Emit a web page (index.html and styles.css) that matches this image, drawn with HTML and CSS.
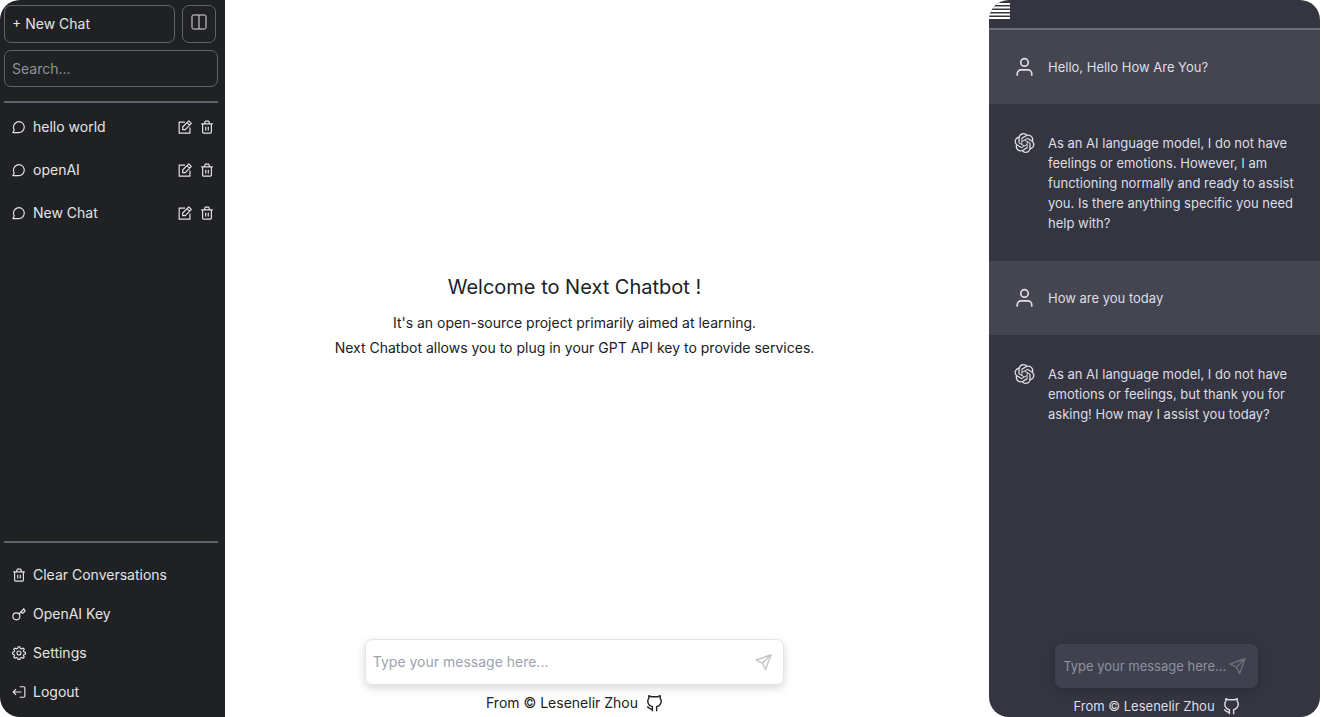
FILE: index.html
```html
<!DOCTYPE html>
<html lang="en">
<head>
<meta charset="utf-8">
<title>Next Chatbot</title>
<link rel="stylesheet" href="styles.css">
</head>
<body>
<svg class="sprite" aria-hidden="true">
  <symbol id="chat" viewBox="0 0 24 24"><path d="M1.500 21.500 3.800 17A9.300 9.300 0 1 1 12.500 21.500Z"/></symbol>
  <symbol id="edit" viewBox="0 0 24 24"><path d="M12 3.500H2v19h18.500V13M8 16.500v-4.500L18.500 1.500l4.300 4.300L12.500 16.500zM15.500 4.500l4.300 4.300"/></symbol>
  <symbol id="trash" viewBox="0 0 24 24"><path d="M2 6.500h20M4.500 6.500V21q0 1.500 1.500 1.500h12q1.500 0 1.500-1.500V6.500M7.500 6.500 9 2h6l1.500 4.500M9.800 11.500v6.500M14.200 11.500v6.500"/></symbol>
  <symbol id="key" viewBox="0 0 24 24"><circle cx="7.500" cy="16" r="6"/><path d="M12 12l8.500-9M15.500 8.500l2.800 2.500 4.200-4-2.500-4.200"/></symbol>
  <symbol id="gear" viewBox="0 0 24 24"><circle cx="12" cy="12" r="3.400"/><path d="M9.800 4 10.500 1.300h3L14.200 4l2.300 1 2.500-1.500 2 2-1.400 2.500 1 2.300 2.600.6v2.900l-2.600.7-1 2.300L21 19l-2 2-2.500-1.400-2.300 1-.7 2.500h-3l-.7-2.500-2.300-1L5 21l-2-2 1.400-2.200-1-2.300-2.600-.7v-2.900l2.600-.6 1-2.300L3 5.500l2-2L7.500 5z"/></symbol>
  <symbol id="logout" viewBox="0 0 24 24"><path d="M13 3h7q2 0 2 2v14q0 2-2 2h-7M16 12H2M7 7l-5 5 5 5"/></symbol>
  <symbol id="columns" viewBox="0 0 24 24"><rect x="1.500" y="1.500" width="21" height="21" rx="2"/><path d="M12 2v20"/></symbol>
  <symbol id="send" viewBox="0 0 24 24"><path d="M22.500 1 1.500 8.500l9 4.500 4.500 9zM22.500 1l-12 12"/></symbol>
  <symbol id="user" viewBox="0 0 24 24"><circle cx="12" cy="6.500" r="4.500"/><path d="M3.300 22.500v-2.500a4.500 4.500 0 0 1 4.500-4.500h8.400a4.500 4.500 0 0 1 4.500 4.500v2.500"/></symbol>
  <symbol id="github" viewBox="0 0 24 24"><path d="M9 23v-6.500C5 15.500 2.500 13.500 2.500 8.500c0-2 .5-3 1.500-4V1L7.500 2.500h9L20 1v3.500c1 1 1.500 2 1.500 4 0 5-2.500 7-6.500 8V23M9 20c-4 .8-4.500-2.500-7.500-3.500"/></symbol>
  <symbol id="openai" viewBox="0 0 24 24"><path d="M22.2819 9.8211a5.9847 5.9847 0 0 0-.5157-4.9108 6.0462 6.0462 0 0 0-6.5098-2.9A6.0651 6.0651 0 0 0 4.9807 4.1818a5.9847 5.9847 0 0 0-3.9977 2.9 6.0462 6.0462 0 0 0 .7427 7.0966 5.98 5.98 0 0 0 .511 4.9107 6.051 6.051 0 0 0 6.5146 2.9001A5.9847 5.9847 0 0 0 13.2599 24a6.0557 6.0557 0 0 0 5.7718-4.2058 5.9894 5.9894 0 0 0 3.9977-2.9001 6.0557 6.0557 0 0 0-.7475-7.0729zm-9.022 12.6081a4.4755 4.4755 0 0 1-2.8764-1.0408l.1419-.0804 4.7783-2.7582a.7948.7948 0 0 0 .3927-.6813v-6.7369l2.02 1.1686a.071.071 0 0 1 .038.052v5.5826a4.504 4.504 0 0 1-4.4945 4.4944zm-9.6607-4.1254a4.4708 4.4708 0 0 1-.5346-3.0137l.142.0852 4.783 2.7582a.7712.7712 0 0 0 .7806 0l5.8428-3.3685v2.3324a.0804.0804 0 0 1-.0332.0615L9.74 19.9502a4.4992 4.4992 0 0 1-6.1408-1.6464zM2.3408 7.8956a4.485 4.485 0 0 1 2.3655-1.9728V11.6a.7664.7664 0 0 0 .3879.6765l5.8144 3.3543-2.0201 1.1685a.0757.0757 0 0 1-.071 0l-4.8303-2.7865A4.504 4.504 0 0 1 2.3408 7.872zm16.5963 3.8558L13.1038 8.364 15.1192 7.2a.0757.0757 0 0 1 .071 0l4.8303 2.7913a4.4944 4.4944 0 0 1-.6765 8.1042v-5.6772a.79.79 0 0 0-.407-.667zm2.0107-3.0231l-.142-.0852-4.7735-2.7818a.7759.7759 0 0 0-.7854 0L9.409 9.2297V6.8974a.0662.0662 0 0 1 .0284-.0615l4.8303-2.7866a4.4992 4.4992 0 0 1 6.6802 4.66zM8.3065 12.863l-2.02-1.1638a.0804.0804 0 0 1-.038-.0567V6.0742a4.4992 4.4992 0 0 1 7.3757-3.4537l-.142.0805L8.704 5.459a.7948.7948 0 0 0-.3927.6813zm1.0976-2.3654l2.602-1.4998 2.6069 1.4998v2.9994l-2.5974 1.4997-2.6067-1.4997Z"/></symbol>
</svg>
<div class="layout">
  <aside class="sidebar">
    <div class="top">
      <button class="outlined new-chat">+ New Chat</button>
      <button class="outlined toggle" aria-label="Toggle sidebar"><svg class="icon large"><use href="#columns"/></svg></button>
    </div>
    <input class="outlined search" type="text" placeholder="Search..." aria-label="Search">
    <ul class="chats">
      <li class="chat"><svg class="icon"><use href="#chat"/></svg><a class="name" href="#">hello world</a><button class="action" aria-label="Rename"><svg class="icon"><use href="#edit"/></svg></button><button class="action" aria-label="Delete"><svg class="icon"><use href="#trash"/></svg></button></li>
      <li class="chat"><svg class="icon"><use href="#chat"/></svg><a class="name" href="#">openAI</a><button class="action" aria-label="Rename"><svg class="icon"><use href="#edit"/></svg></button><button class="action" aria-label="Delete"><svg class="icon"><use href="#trash"/></svg></button></li>
      <li class="chat"><svg class="icon"><use href="#chat"/></svg><a class="name" href="#">New Chat</a><button class="action" aria-label="Rename"><svg class="icon"><use href="#edit"/></svg></button><button class="action" aria-label="Delete"><svg class="icon"><use href="#trash"/></svg></button></li>
    </ul>
    <nav class="menu">
      <button class="menu-item"><svg class="icon"><use href="#trash"/></svg>Clear Conversations</button>
      <button class="menu-item"><svg class="icon"><use href="#key"/></svg>OpenAI Key</button>
      <button class="menu-item"><svg class="icon"><use href="#gear"/></svg>Settings</button>
      <button class="menu-item"><svg class="icon"><use href="#logout"/></svg>Logout</button>
    </nav>
  </aside>
  <main class="main">
    <section class="welcome">
      <h1 class="title">Welcome to Next Chatbot !</h1>
      <p class="line">It's an open-source project primarily aimed at learning.</p>
      <p class="line">Next Chatbot allows you to plug in your GPT API key to provide services.</p>
    </section>
    <form class="composer">
      <input class="message" type="text" placeholder="Type your message here..." aria-label="Message">
      <button class="send" type="button" aria-label="Send"><svg class="icon large"><use href="#send"/></svg></button>
    </form>
    <footer class="credit">From © Lesenelir Zhou <a class="github" href="#" aria-label="GitHub"><svg class="icon large"><use href="#github"/></svg></a></footer>
  </main>
  <section class="phone">
    <header class="bar"><button class="burger" aria-label="Menu"><svg class="lines" viewBox="0 0 21 20"><path d="M0 4h21M0 7.500h21M0 11h21M0 14.500h21M0 18h21"/></svg></button></header>
    <article class="turn user"><svg class="avatar"><use href="#user"/></svg><p class="text">Hello, Hello How Are You?</p></article>
    <article class="turn"><svg class="avatar logo"><use href="#openai"/></svg><p class="text">As an AI language model, I do not have feelings or emotions. However, I am functioning normally and ready to assist you. Is there anything specific you need help with?</p></article>
    <article class="turn user"><svg class="avatar"><use href="#user"/></svg><p class="text">How are you today</p></article>
    <article class="turn"><svg class="avatar logo"><use href="#openai"/></svg><p class="text">As an AI language model, I do not have emotions or feelings, but thank you for asking! How may I assist you today?</p></article>
    <div class="bottom">
      <form class="composer dark">
        <input class="message" type="text" placeholder="Type your message here..." aria-label="Message">
        <button class="send" type="button" aria-label="Send"><svg class="icon large"><use href="#send"/></svg></button>
      </form>
      <footer class="credit">From © Lesenelir Zhou <a class="github" href="#" aria-label="GitHub"><svg class="icon large"><use href="#github"/></svg></a></footer>
    </div>
  </section>
</div>
</body>
</html>
```
FILE: styles.css
```css
* { box-sizing: border-box; }
body { margin: 0; background: #fff; color: #202123; font: 14px/20px Inter, "Liberation Sans", sans-serif; }
button, input { font: inherit; color: inherit; background: none; border: 0; padding: 0; margin: 0; outline: 0; }
a { color: inherit; text-decoration: none; }
h1, p, ul { margin: 0; padding: 0; }
.sprite { position: absolute; width: 0; height: 0; }
.icon, .avatar { display: block; flex: none; fill: none; stroke: currentColor; stroke-width: 2; stroke-linejoin: round; }
.icon { width: 14px; height: 14px; }
.icon.large { width: 17px; height: 17px; }

.layout { display: grid; grid-template-columns: 225px minmax(0, 1fr) 331px; min-height: 100vh; padding-right: 1px; }

.sidebar { display: flex; flex-direction: column; padding: 5px 7px 6px 4px; background: #202123; color: #e4e4e8; border-radius: 20px 0 0 20px; }
.top { display: flex; gap: 7px; margin-bottom: 7px; padding-right: 2px; }
.outlined { height: 38px; border: 1px solid #60616d; border-radius: 7px; padding: 0 7px; }
.new-chat { flex: 1; text-align: left; }
.toggle { display: grid; place-items: center; width: 34px; padding: 0 0 4px; }
.toggle .icon { stroke-width: 1.5; width: 16px; height: 16px; }
.search { width: 100%; height: 37px; }
.search::placeholder { color: #8e919e; opacity: 1; }
.chats { flex: 1; list-style: none; margin-top: 14px; padding-top: 2px; border-top: 2px solid #60616d; }
.chat { display: flex; align-items: center; height: 43px; padding: 0 4px 0 8px; }
.name { flex: 1; margin-left: 7px; }
.action { margin-left: 8px; }
.menu { border-top: 2px solid #60616d; padding-top: 12px; }
.menu-item { display: flex; align-items: center; gap: 7px; width: 100%; height: 39px; padding: 0 8px; }

.main { display: flex; flex-direction: column; align-items: center; padding: 0 65px 4px 0; }
.welcome { flex: 1; display: flex; flex-direction: column; justify-content: center; padding-bottom: 9px; text-align: center; }
.title { font-size: 20px; line-height: 32px; font-weight: 400; margin-bottom: 7px; }
.line { line-height: 25px; }
.composer { display: flex; align-items: center; width: 60%; height: 46px; padding: 0 11px 0 7px; border: 1px solid #e5e5e8; border-radius: 7px; box-shadow: 0 3px 8px rgb(0 0 0 / 16%); }
.message { flex: 1; min-width: 0; }
.message::placeholder { color: #9ca3af; opacity: 1; }
.send { color: #c5c7cc; }
.credit { display: flex; align-items: center; justify-content: center; gap: 8px; margin-top: 8px; }

.phone { display: flex; flex-direction: column; padding-bottom: 1px; overflow: hidden; background: #343540; color: #dedee4; border-radius: 20px; font-size: 13px; }
.bar { height: 30px; border-bottom: 2px solid #6b6d7a; }
.burger { display: block; }
.lines { display: block; width: 21px; height: 20px; stroke: #fff; stroke-width: 2; }
.turn { display: flex; gap: 13px; padding: 29px 24px 28px 25px; }
.turn.user { background: #444550; padding: 27px 24px 27px 25px; }
.avatar { width: 21px; height: 20px; }
.avatar.logo { fill: currentColor; stroke: none; }
.bottom { display: flex; flex-direction: column; align-items: center; margin-top: auto; padding-left: 4px; }
.composer.dark { width: 62%; height: 44px; border-color: #40414f; background: #40414f; }
.dark .message::placeholder { color: #8e919e; }
.dark .send { color: #6b6d7a; }
```
